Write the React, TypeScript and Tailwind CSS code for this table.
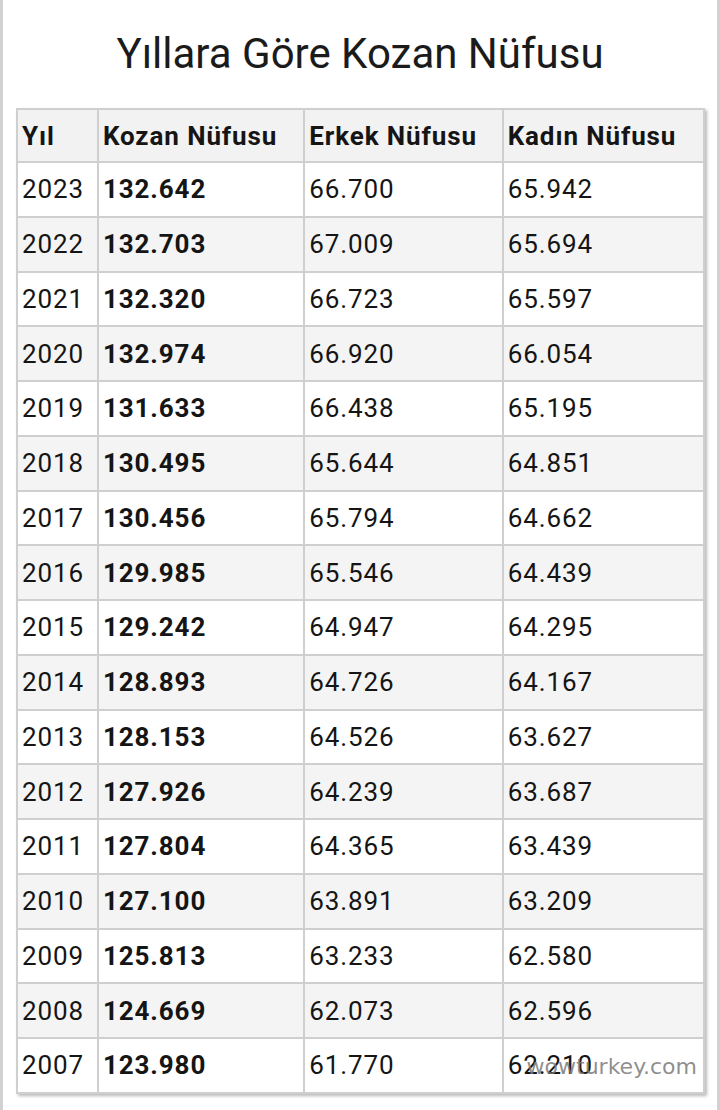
const rows: [string, string, string, string][] = [
  ['2023', '132.642', '66.700', '65.942'],
  ['2022', '132.703', '67.009', '65.694'],
  ['2021', '132.320', '66.723', '65.597'],
  ['2020', '132.974', '66.920', '66.054'],
  ['2019', '131.633', '66.438', '65.195'],
  ['2018', '130.495', '65.644', '64.851'],
  ['2017', '130.456', '65.794', '64.662'],
  ['2016', '129.985', '65.546', '64.439'],
  ['2015', '129.242', '64.947', '64.295'],
  ['2014', '128.893', '64.726', '64.167'],
  ['2013', '128.153', '64.526', '63.627'],
  ['2012', '127.926', '64.239', '63.687'],
  ['2011', '127.804', '64.365', '63.439'],
  ['2010', '127.100', '63.891', '63.209'],
  ['2009', '125.813', '63.233', '62.580'],
  ['2008', '124.669', '62.073', '62.596'],
  ['2007', '123.980', '61.770', '62.210'],
];

const cell = 'border-2 border-[#cfcfcf] pl-[4px] text-left align-middle';

export default function App() {
  return (
    <div
      className="min-h-[1110px] w-[720px] border-x-[3px] border-[#d2d2d2] bg-white text-[#151515]"
      style={{ fontFamily: 'Roboto, "Liberation Sans", sans-serif' }}
    >
      <h1 className="pt-[28px] text-center text-[42px] leading-[52px] font-normal text-[#1b1b1b]">
        Yıllara Göre Kozan Nüfusu
      </h1>

      <div className="relative ml-[13px] mt-[28px] w-[689px] shadow-[2px_2px_3px_rgba(0,0,0,0.28)]">
        <table className="w-full border-collapse text-[26px] leading-none tracking-[0.9px]">
          <colgroup>
            <col className="w-[81px]" />
            <col className="w-[207px]" />
            <col className="w-[199px]" />
            <col className="w-[202px]" />
          </colgroup>
          <thead>
            <tr className="h-[53px] bg-[#f2f2f2] font-bold">
              <th className={cell}>Yıl</th>
              <th className={cell}>Kozan Nüfusu</th>
              <th className={cell}>Erkek Nüfusu</th>
              <th className={cell}>Kadın Nüfusu</th>
            </tr>
          </thead>
          <tbody>
            {rows.map((r, i) => (
              <tr key={r[0]} className={`h-[54.75px] ${i % 2 === 1 ? 'bg-[#f4f4f4]' : 'bg-white'}`}>
                <td className={cell}>{r[0]}</td>
                <td className={`${cell} font-bold`}>{r[1]}</td>
                <td className={cell}>{r[2]}</td>
                <td className={cell}>{r[3]}</td>
              </tr>
            ))}
          </tbody>
        </table>
        <span
          className="pointer-events-none absolute bottom-[16px] right-[8px] text-[22px] leading-none text-[#7a7a7a]/85"
          style={{ fontFamily: '"DejaVu Sans", sans-serif' }}
        >
          wowturkey.com
        </span>
      </div>
    </div>
  );
}
